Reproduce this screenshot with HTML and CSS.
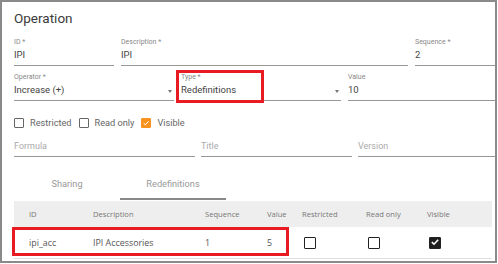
FILE: index.html
```html
<!DOCTYPE html>
<html lang="en">
<head>
    <meta charset="UTF-8">
    <title>Operation</title>
    <link rel="stylesheet" href="styles.css">
</head>
<body>
<div class="frame">
    <div class="content">
        <h1 class="title">Operation</h1>

        <div class="row row-a">
            <div class="field">
                <div class="label">ID *</div>
                <div class="value">IPI</div>
            </div>
            <div class="field">
                <div class="label">Description *</div>
                <div class="value">IPI</div>
            </div>
            <div class="field">
                <div class="label">Sequence *</div>
                <div class="value">2</div>
            </div>
        </div>

        <div class="row row-b">
            <div class="field">
                <div class="label">Operator *</div>
                <div class="value select">Increase (+)<span class="arrow"></span></div>
            </div>
            <div class="field marked">
                <div class="label">Type *</div>
                <div class="value select">Redefinitions<span class="arrow"></span></div>
                <div class="mark mark-type"></div>
            </div>
            <div class="field">
                <div class="label">Value</div>
                <div class="value">10</div>
            </div>
        </div>

        <div class="checks">
            <label class="check"><span class="box"></span>Restricted</label>
            <label class="check"><span class="box"></span>Read only</label>
            <label class="check"><span class="box on">
                <svg viewBox="0 0 10 10" width="10" height="10"><path d="M2.6 5.2 L4.3 6.8 L7.6 3.3" fill="none" stroke="#fff" stroke-width="1"/></svg>
            </span>Visible</label>
        </div>

        <div class="row row-c">
            <div class="field empty"><div class="placeholder">Formula</div></div>
            <div class="field empty"><div class="placeholder">Title</div></div>
            <div class="field empty"><div class="placeholder">Version</div></div>
        </div>

        <div class="tabs">
            <div class="tab">Sharing</div>
            <div class="tab active">Redefinitions</div>
        </div>

        <div class="table">
            <div class="thead">
                <div>ID</div>
                <div>Description</div>
                <div>Sequence</div>
                <div>Value</div>
                <div>Restricted</div>
                <div>Read only</div>
                <div>Visible</div>
            </div>
            <div class="trow">
                <div>ipi_acc</div>
                <div>IPI Accessories</div>
                <div>1</div>
                <div>5</div>
                <div><span class="cell-box"></span></div>
                <div><span class="cell-box"></span></div>
                <div><span class="cell-box on">
                    <svg viewBox="0 0 12 12" width="12" height="12"><path d="M2.8 6.2 L5 8.2 L9.2 3.8" fill="none" stroke="#fff" stroke-width="1.6"/></svg>
                </span></div>
                <div class="mark mark-row"></div>
            </div>
        </div>
    </div>
</div>
</body>
</html>
```

FILE: styles.css
```css
body {
    margin: 0;
    padding: 0;
    background: #fff;
    font-family: Roboto, "Liberation Sans", sans-serif;
}

.frame {
    width: 497px;
    height: 263px;
    box-sizing: border-box;
    border: 2px solid #8a8a8a;
    overflow: hidden;
    padding: 8px 0 0 12px;
}

.content {
    width: 540px;
}

.title {
    margin: 0 0 12px;
    font-size: 13.5px;
    line-height: 16px;
    font-weight: 400;
    color: #3a3a3a;
}

/* form rows */
.row {
    display: grid;
    column-gap: 7px;
}
.row-a {
    grid-template-columns: 100px 287px 1fr;
}
.row-b {
    margin-top: 7px;
    grid-template-columns: 160px 160px 1fr;
}
.row-c {
    margin-top: 12px;
    column-gap: 6px;
    grid-template-columns: 181px 151px 1fr;
}

.field {
    position: relative;
    padding-bottom: 4px;
    border-bottom: 1px solid #999;
}
.label {
    font-size: 7px;
    line-height: 9px;
    color: #888;
}
.value {
    margin-top: 2px;
    font-size: 9.5px;
    line-height: 12px;
    color: #444;
}
.select {
    display: flex;
    justify-content: space-between;
    align-items: center;
}
.arrow {
    width: 0;
    height: 0;
    margin: 2px 2px 0 0;
    border-left: 2.5px solid transparent;
    border-right: 2.5px solid transparent;
    border-top: 3px solid #777;
}
.placeholder {
    font-size: 9px;
    line-height: 12px;
    color: #aaa;
}

/* checkbox row */
.checks {
    display: flex;
    align-items: center;
    margin-top: 16px;
    height: 11px;
}
.check {
    display: flex;
    align-items: center;
    margin-right: 7px;
    font-size: 9.2px;
    color: #666;
}
.box {
    width: 10px;
    height: 10px;
    box-sizing: border-box;
    border: 1px solid #666;
    border-radius: 1px;
    margin-right: 6px;
}
.box.on {
    background: #f7931e;
    border-color: #f7931e;
}
.box svg {
    display: block;
    margin: -1px;
}

/* tabs */
.tabs {
    display: flex;
    margin-top: 13px;
}
.tab {
    width: 106px;
    padding: 8px 0;
    text-align: center;
    font-size: 9.2px;
    line-height: 12px;
    color: #999;
    border-bottom: 2px solid transparent;
}
.tab.active {
    border-bottom-color: #888;
}

/* table */
.table {
    margin-top: 1px;
    width: 478px;
    font-family: "Open Sans", "Liberation Sans", sans-serif;
}
.thead, .trow {
    display: grid;
    grid-template-columns: 79px 112px 62px 35px 64px 61px 1fr;
    align-items: center;
}
.thead {
    height: 26px;
    background: #eeeeee;
    font-size: 7.6px;
    color: #777;
}
.thead div:first-child, .trow div:first-child {
    padding-left: 15px;
}
.trow {
    position: relative;
    height: 31px;
    border-bottom: 1px solid #ddd;
    font-size: 8.9px;
    color: #555;
}
.cell-box {
    display: block;
    width: 12px;
    height: 12px;
    box-sizing: border-box;
    margin-left: 2px;
    border: 1.5px solid #222;
    border-radius: 1px;
}
.cell-box.on {
    background: #1e1e1e;
}
.cell-box svg {
    display: block;
    margin: -1.5px;
}

/* red annotation boxes */
.mark {
    position: absolute;
    border: 3px solid #e81b23;
    box-sizing: border-box;
}
.mark-type {
    left: -5px;
    top: -3px;
    width: 88px;
    height: 33px;
}
.mark-row {
    left: -2px;
    top: 0;
    width: 277px;
    height: 29px;
}
```
